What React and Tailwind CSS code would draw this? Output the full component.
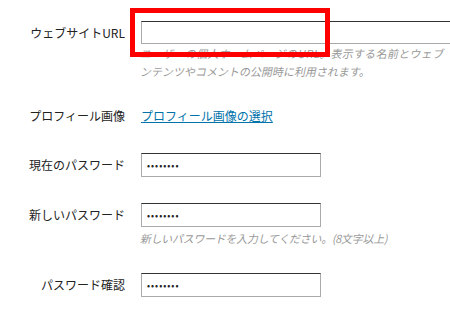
import React from 'react';

const font = { fontFamily: '"Noto Sans CJK JP", "Noto Sans", sans-serif' };

const Label = ({ children }) => (
    <div className="w-[125px] shrink-0 text-right text-[12px] leading-[16px] text-[#222]">{children}</div>
);

const Field = ({ w = 'w-[180px]', value = '' }) => (
    <input
        type="password"
        readOnly
        value={value}
        className={`${w} h-6 shrink-0 border border-[#aaa] border-t-[#333] bg-white px-[5px] text-[9px] tracking-[1px] text-[#222] outline-none`}
    />
);

const App = () => {
    return (
        <div className="relative w-[450px] h-[319px] overflow-hidden bg-white" style={font}>
            {/* website url */}
            <div className="mt-[21px] flex items-center gap-4">
                <Label>ウェブサイトURL</Label>
                <input type="text" readOnly className="w-[330px] h-[23px] shrink-0 border border-[#aaa] border-t-[#333] bg-white outline-none" />
            </div>
            <div className="ml-[141px] flex flex-col items-start text-[11px] leading-[18px] text-[#999] whitespace-nowrap">
                <span className="inline-block -skew-x-12 tracking-[0.3px]">ユーザーの個人ホームページのURL。表示する名前とウェブ</span>
                <span className="inline-block -skew-x-12">ンテンツやコメントの公開時に利用されます。</span>
            </div>

            {/* profile image */}
            <div className="mt-[28px] flex items-center gap-4">
                <Label>プロフィール画像</Label>
                <a href="#" className="text-[12px] leading-[16px] text-[#0073aa] underline">プロフィール画像の選択</a>
            </div>

            <div className="mt-[29px] flex items-center gap-4">
                <Label>現在のパスワード</Label>
                <Field value="12345678" />
            </div>

            <div className="mt-[26px] flex items-center gap-4">
                <Label>新しいパスワード</Label>
                <Field value="12345678" />
            </div>
            <div className="ml-[141px] mt-[2px] flex text-[11px] leading-[18px] text-[#999] whitespace-nowrap">
                <span className="inline-block -skew-x-12 tracking-[-0.3px]">新しいパスワードを入力してください。(8文字以上)</span>
            </div>

            <div className="mt-[26px] flex items-center gap-4">
                <Label>パスワード確認</Label>
                <Field value="12345678" />
            </div>

            {/* highlight */}
            <div className="absolute left-[130px] top-[8px] w-[200px] h-[49px] border-[5px] border-[#ff0000]" />
        </div>
    );
};

export default App;
